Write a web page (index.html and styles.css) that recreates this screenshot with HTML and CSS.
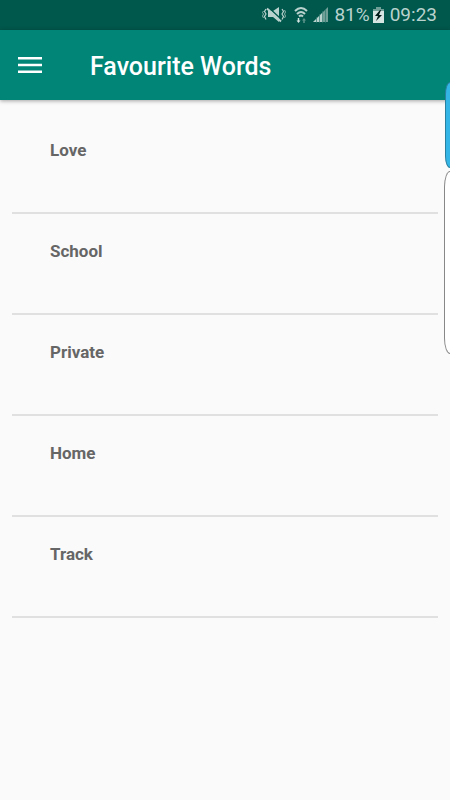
FILE: index.html
```html
<!DOCTYPE html>
<html lang="en">
<head>
<meta charset="utf-8">
<meta name="viewport" content="width=device-width, initial-scale=1">
<title>Favourite Words</title>
<link rel="stylesheet" href="styles.css">
</head>
<body>
<div class="status">
  <svg class="icon-mute" width="24" height="20" viewBox="0 0 24 20" aria-hidden="true">
    <path d="M6 6h5l6-4v15l-6-5H6z" fill="#b9d2ce"/>
    <path d="M6 2l14 13" stroke="#00574b" stroke-width="1.500"/>
    <path d="M5 3.500l14 13" stroke="#b9d2ce" stroke-width="2"/>
    <path d="M4 4l-1.500 2.500 1.500 2.500-1.500 2.500 1.500 3M20 4l1.500 2.500-1.500 2.500 1.500 2.500-1.500 3" fill="none" stroke="#b9d2ce" stroke-width="1.200"/>
    <path d="M1.500 6l-1 1.500 1 1.500-1 2 1 2M22.500 5l1 2-1 2 1 2-1 2" fill="none" stroke="#8fb5af"/>
  </svg>
  <svg class="icon-wifi" width="14" height="18" viewBox="0 0 14 18" aria-hidden="true">
    <path d="M1 5q6-6 12 0M3 8q4-4 8 0M5 10.500q2-2 4 0" fill="none" stroke="#b9d2ce" stroke-width="2"/>
    <path d="M4.500 12v3" stroke="#d5e5e2" stroke-width="1.500"/>
    <path d="M2.500 14.500h4l-2 2.500z" fill="#d5e5e2"/>
    <path d="M10 17v-3" stroke="#5d948b" stroke-width="1.500"/>
    <path d="M8 14.500h4l-2-2.500z" fill="#5d948b"/>
  </svg>
  <svg class="icon-signal" width="16" height="16" viewBox="0 0 16 16" aria-hidden="true">
    <path d="M0 15l10-10v10z" fill="#b9d2ce"/>
    <path d="M10 5l5-5v15h-5z" fill="#6f9f97"/>
    <path d="M3.500 10v6M6.500 7v9M9.500 4v12M12.500 2v14" stroke="#2d786e" stroke-width=".7"/>
  </svg>
  <span class="percent">81%</span>
  <svg class="icon-battery" width="11" height="16" viewBox="0 0 11 16" aria-hidden="true">
    <path d="M3 0h5v2h3v3H0V2h3z" fill="#6f9f97"/>
    <path d="M0 4h11v12H0z" fill="#d5e5e2"/>
    <path d="M7 3L2 9h3l-2 5 6-6H6l2-5z" fill="#001b18"/>
  </svg>
  <time class="clock">09:23</time>
</div>
<header class="appbar">
  <button class="menu" type="button" aria-label="Open menu">
    <svg width="24" height="16" viewBox="0 0 24 16" aria-hidden="true">
      <path d="M0 1.300h24M0 8h24M0 14.700h24" stroke="#fff" stroke-width="2.600"/>
    </svg>
  </button>
  <h1 class="title">Favourite Words</h1>
</header>
<main>
  <ul class="words">
    <li class="word">Love</li>
    <li class="word">School</li>
    <li class="word">Private</li>
    <li class="word">Home</li>
    <li class="word">Track</li>
  </ul>
</main>
<div class="edge edge-blue"></div>
<div class="edge edge-white"></div>
</body>
</html>
```
FILE: styles.css
```css
* {
  box-sizing: border-box;
}

body {
  position: relative;
  margin: 0;
  min-height: 100vh;
  overflow-x: hidden;
  background: #fafafa;
  font-family: Roboto, "Liberation Sans", sans-serif;
}

.status {
  display: flex;
  align-items: center;
  justify-content: flex-end;
  height: 30px;
  padding-right: 13px;
  background: #00574b;
  color: #b9d2ce;
  font-size: 19px;
  line-height: 32px;
}

.icon-mute {
  margin-right: 8px;
}

.icon-wifi {
  margin-right: 5px;
}

.icon-signal {
  margin-right: 5px;
}

.percent {
  margin-right: 3px;
}

.icon-battery {
  margin-right: 6px;
}

.appbar {
  display: flex;
  align-items: center;
  height: 70px;
  padding-left: 18px;
  background: #008577;
  box-shadow: 0 1px 4px rgba(0, 0, 0, 0.35);
  color: #fff;
}

.menu {
  display: flex;
  width: 24px;
  margin: 0 48px 0 0;
  padding: 0;
  border: 0;
  background: none;
}

.title {
  margin: 0;
  padding-top: 4px;
  font-size: 25px;
  font-weight: 500;
  line-height: 32px;
}

.words {
  margin: 0;
  padding: 13px 12px 0;
  list-style: none;
}

.word {
  height: 101px;
  padding: 25px 38px 0;
  border-bottom: 2px solid #e0e0e0;
  color: #666;
  font-size: 17px;
  font-weight: 700;
  line-height: 24px;
}

.edge {
  position: absolute;
  right: 0;
  border: 1px solid #888;
  border-right: 0;
}

.edge-blue {
  top: 82px;
  width: 5px;
  height: 86px;
  border-color: #2b7f9e;
  border-radius: 5px 0 0 5px / 12px 0 0 12px;
  background: #33b5e5;
}

.edge-white {
  top: 171px;
  width: 6px;
  height: 183px;
  border-radius: 6px 0 0 6px / 16px 0 0 16px;
  background: #fff;
}
```
